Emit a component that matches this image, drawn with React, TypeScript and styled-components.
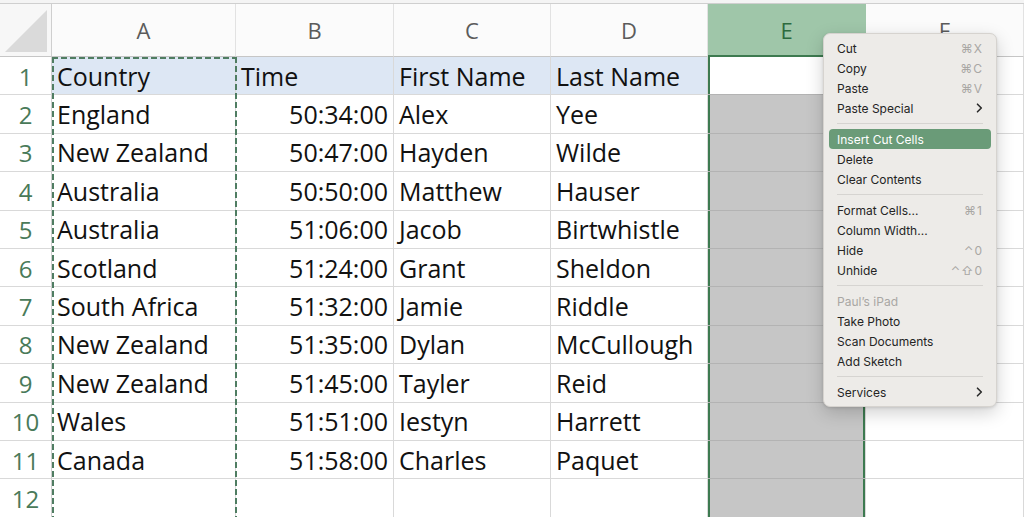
import styled, { createGlobalStyle } from 'styled-components'
import { Fragment, ReactElement } from 'react'

const GlobalStyle = createGlobalStyle`
  html, body {
    margin: 0;
    padding: 0;
    background: #ffffff;
  }
  * {
    box-sizing: border-box;
  }
`

const gridLine = '#d9d9d9'
const selGreen = '#3d7a50'

type Row = [string, string, string, string]
const rows: Row[] = [
  ['Country', 'Time', 'First Name', 'Last Name'],
  ['England', '50:34:00', 'Alex', 'Yee'],
  ['New Zealand', '50:47:00', 'Hayden', 'Wilde'],
  ['Australia', '50:50:00', 'Matthew', 'Hauser'],
  ['Australia', '51:06:00', 'Jacob', 'Birtwhistle'],
  ['Scotland', '51:24:00', 'Grant', 'Sheldon'],
  ['South Africa', '51:32:00', 'Jamie', 'Riddle'],
  ['New Zealand', '51:35:00', 'Dylan', 'McCullough'],
  ['New Zealand', '51:45:00', 'Tayler', 'Reid'],
  ['Wales', '51:51:00', 'Iestyn', 'Harrett'],
  ['Canada', '51:58:00', 'Charles', 'Paquet'],
  ['', '', '', ''],
]

const columns = ['A', 'B', 'C', 'D', 'E', 'F']

type MenuEntry =
  | { kind: 'item'; label: string; shortcut?: string; submenu?: boolean; active?: boolean; disabled?: boolean }
  | { kind: 'sep' }

const menu: MenuEntry[] = [
  { kind: 'item', label: 'Cut', shortcut: '⌘X' },
  { kind: 'item', label: 'Copy', shortcut: '⌘C' },
  { kind: 'item', label: 'Paste', shortcut: '⌘V' },
  { kind: 'item', label: 'Paste Special', submenu: true },
  { kind: 'sep' },
  { kind: 'item', label: 'Insert Cut Cells', active: true },
  { kind: 'item', label: 'Delete' },
  { kind: 'item', label: 'Clear Contents' },
  { kind: 'sep' },
  { kind: 'item', label: 'Format Cells...', shortcut: '⌘1' },
  { kind: 'item', label: 'Column Width...' },
  { kind: 'item', label: 'Hide', shortcut: '⌃0' },
  { kind: 'item', label: 'Unhide', shortcut: '⌃⇧0' },
  { kind: 'sep' },
  { kind: 'item', label: 'Paul’s iPad', disabled: true },
  { kind: 'item', label: 'Take Photo' },
  { kind: 'item', label: 'Scan Documents' },
  { kind: 'item', label: 'Add Sketch' },
  { kind: 'sep' },
  { kind: 'item', label: 'Services', submenu: true },
]

const Page = styled.div`
  position: relative;
  width: 1024px;
  height: 517px;
  overflow: hidden;
  background: #ffffff;
`

const TopStrip = styled.div`
  height: 4px;
  border-bottom: 1px solid #cfcfcf;
  background: #f4f4f4;
`

const Sheet = styled.div`
  position: relative;
  display: grid;
  grid-template-columns: 52px 184px 158px 157px 157px 158px 1fr;
  grid-template-rows: 53px repeat(12, 38.4px);
  font-family: 'Open Sans', 'Noto Sans', sans-serif;
`

const Corner = styled.div`
  position: relative;
  background: #f7f7f7;
  border-right: 1px solid #cfcfcf;
  border-bottom: 1px solid #c6c6c6;
  &::after {
    content: '';
    position: absolute;
    left: 5px;
    right: 4px;
    top: 6px;
    bottom: 4px;
    background: #dadada;
    clip-path: polygon(100% 0, 100% 100%, 0 100%);
  }
`

const ColHeader = styled.div<{ $selected?: boolean }>`
  display: flex;
  align-items: center;
  justify-content: center;
  font-size: 22px;
  color: ${({ $selected }) => ($selected ? '#2c6a3e' : '#5b5b5b')};
  background: ${({ $selected }) => ($selected ? '#9fc6a9' : '#fbfbfb')};
  border-right: 1px solid ${({ $selected }) => ($selected ? '#9fc6a9' : '#e2e2e2')};
  border-bottom: ${({ $selected }) => ($selected ? `2px solid ${selGreen}` : '1px solid #c6c6c6')};
`

const RowHeader = styled.div`
  display: flex;
  align-items: center;
  justify-content: center;
  padding-top: 1px;
  font-size: 24px;
  color: #497a59;
  background: #ffffff;
  border-right: 1px solid #cfcfcf;
  border-bottom: 1px solid ${gridLine};
`

type CellState = 'none' | 'active' | 'range'

const Cell = styled.div<{ $band?: boolean; $right?: boolean; $sel: CellState }>`
  display: flex;
  align-items: center;
  justify-content: ${({ $right }) => ($right ? 'flex-end' : 'flex-start')};
  padding: 0 5px 0 5px;
  font-size: 25px;
  color: #111111;
  white-space: nowrap;
  overflow: hidden;
  background: ${({ $band, $sel }) => ($sel === 'range' ? '#c6c6c6' : $band ? '#dde7f4' : '#ffffff')};
  border-right: 1px solid ${gridLine};
  border-bottom: 1px solid ${({ $sel }) => ($sel === 'none' ? gridLine : '#b3b3b3')};
  box-shadow: ${({ $sel }) =>
    $sel === 'none' ? 'none' : `inset 2px 0 0 ${selGreen}, inset -2px 0 0 ${selGreen}`};
`

const dash = (dir: string) =>
  `repeating-linear-gradient(${dir}, #4f7d62 0 6px, transparent 6px 9px)`

// absolutely positioned grid child: sits over column A without taking cells
const Marquee = styled.div`
  position: absolute;
  inset: 0 -1px 0 0;
  grid-column: 2 / 3;
  grid-row: 2 / 14;
  pointer-events: none;
  z-index: 2;
  background:
    ${dash('to bottom')} left top / 2px 100% no-repeat,
    ${dash('to bottom')} right top / 2px 100% no-repeat,
    ${dash('to right')} left top / 100% 2px no-repeat;
`

const Menu = styled.div`
  position: absolute;
  left: 823px;
  top: 33px;
  width: 174px;
  padding: 4px 5px;
  background: #edebe8;
  border: 1px solid #d6d3cf;
  border-radius: 7px;
  box-shadow: 0 6px 18px rgba(0, 0, 0, 0.18), 0 1px 3px rgba(0, 0, 0, 0.12);
  font-family: Inter, 'Liberation Sans', sans-serif;
  font-size: 12px;
  z-index: 5;
`

const MenuItem = styled.div<{ $active?: boolean; $disabled?: boolean }>`
  display: flex;
  align-items: center;
  justify-content: space-between;
  height: 20px;
  padding: 0 8px 0 8px;
  border-radius: 4px;
  color: ${({ $active, $disabled }) => ($active ? '#ffffff' : $disabled ? '#a9a7a4' : '#242424')};
  background: ${({ $active }) => ($active ? '#6a9b78' : 'transparent')};
`

const Shortcut = styled.span`
  color: #a9a7a4;
  letter-spacing: 1px;
`

const Separator = styled.div`
  height: 1px;
  margin: 5px 8px 5px 8px;
  background: #d6d4d1;
`

const Chevron = (): ReactElement => (
  <svg width="7" height="10" viewBox="0 0 7 10">
    <path d="M1.5 1.2 L5.3 5 L1.5 8.8" fill="none" stroke="#2a2a2a" strokeWidth="1.6" strokeLinecap="round" strokeLinejoin="round" />
  </svg>
)

const ContextMenu = (): ReactElement => (
  <Menu>
    {menu.map((entry, i) =>
      entry.kind === 'sep' ? (
        <Separator key={i} />
      ) : (
        <MenuItem key={i} $active={entry.active} $disabled={entry.disabled}>
          <span>{entry.label}</span>
          {entry.shortcut && <Shortcut>{entry.shortcut}</Shortcut>}
          {entry.submenu && <Chevron />}
        </MenuItem>
      ),
    )}
  </Menu>
)

export default function App(): ReactElement {
  return (
    <Page>
      <GlobalStyle />
      <TopStrip />
      <Sheet>
        <Corner />
        {columns.map((c) => (
          <ColHeader key={c} $selected={c === 'E'}>
            {c}
          </ColHeader>
        ))}
        {rows.map((row, r) => (
          <Fragment key={r}>
            <RowHeader>{r + 1}</RowHeader>
            {row.map((value, c) => (
              <Cell key={c} $band={r === 0} $right={c === 1 && r > 0} $sel="none">
                {value}
              </Cell>
            ))}
            <Cell $sel={r === 0 ? 'active' : 'range'} />
            <Cell $sel="none" />
          </Fragment>
        ))}
        <Marquee />
      </Sheet>
      <ContextMenu />
    </Page>
  )
}
